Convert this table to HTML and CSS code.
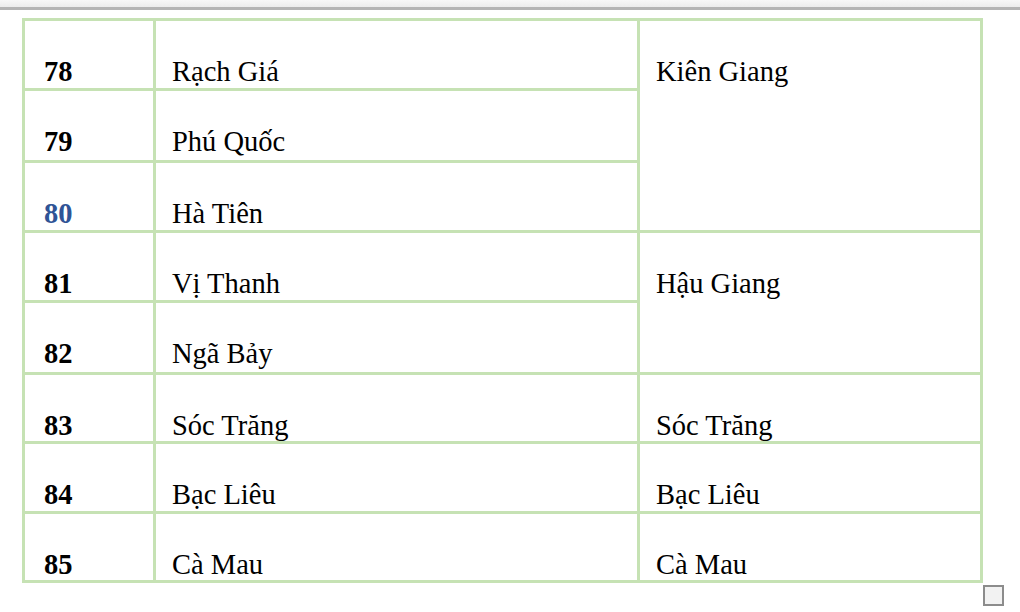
FILE: index.html
```html
<!DOCTYPE html>
<html lang="vi">
<head>
<meta charset="utf-8">
<title>Bảng</title>
<link rel="stylesheet" href="styles.css">
</head>
<body>
<div class="topbar"></div>
<div class="page">
  <div class="table-wrap">
    <table class="grid">
      <colgroup>
        <col class="c1">
        <col class="c2">
        <col class="c3">
      </colgroup>
      <tbody>
        <tr class="r70"><td class="num">78</td><td>Rạch Giá</td><td rowspan="3">Kiên Giang</td></tr>
        <tr class="r72"><td class="num">79</td><td>Phú Quốc</td></tr>
        <tr class="r70"><td class="num blue">80</td><td>Hà Tiên</td></tr>
        <tr class="r70"><td class="num">81</td><td>Vị Thanh</td><td rowspan="2">Hậu Giang</td></tr>
        <tr class="r72"><td class="num">82</td><td>Ngã Bảy</td></tr>
        <tr class="r69"><td class="num">83</td><td>Sóc Trăng</td><td>Sóc Trăng</td></tr>
        <tr class="r70"><td class="num">84</td><td>Bạc Liêu</td><td>Bạc Liêu</td></tr>
        <tr class="r68"><td class="num">85</td><td>Cà Mau</td><td>Cà Mau</td></tr>
      </tbody>
    </table>
    <div class="handle"></div>
  </div>
</div>
</body>
</html>
```

FILE: styles.css
```css
html, body {
  margin: 0;
  padding: 0;
  background: #ffffff;
}
body {
  width: 1020px;
  height: 612px;
  overflow: hidden;
  font-family: "Liberation Serif", "Times New Roman", serif;
  color: #000;
}
.topbar {
  height: 7px;
  background: linear-gradient(#f7f7f7, #ececec);
  border-bottom: 3px solid #b4b4b4;
}
.page {
  padding: 8px 0 0 22px;
}
.table-wrap {
  position: relative;
  width: 958px;
}
.grid {
  border-collapse: collapse;
  table-layout: fixed;
  width: 958px;
  font-size: 28.5px;
}
.c1 { width: 131px; }
.c2 { width: 484px; }
.c3 { width: 343px; }
.grid td {
  box-sizing: border-box;
  border: 3px solid #c6e2b4;
  vertical-align: top;
  padding: 35px 16px 0 16px;
  line-height: 31px;
  white-space: nowrap;
}
.grid td.num {
  font-weight: bold;
  padding-left: 19px;
}
.grid td.blue {
  color: #2f5496;
}
.r70 td { height: 70px; }
.r72 td { height: 72px; }
.r69 td { height: 69px; }
.r68 td { height: 68px; }
.handle {
  position: absolute;
  right: -24px;
  bottom: -23px;
  width: 17px;
  height: 17px;
  border: 2px solid #8c8c8c;
  background: #f2f2f2;
}
```
